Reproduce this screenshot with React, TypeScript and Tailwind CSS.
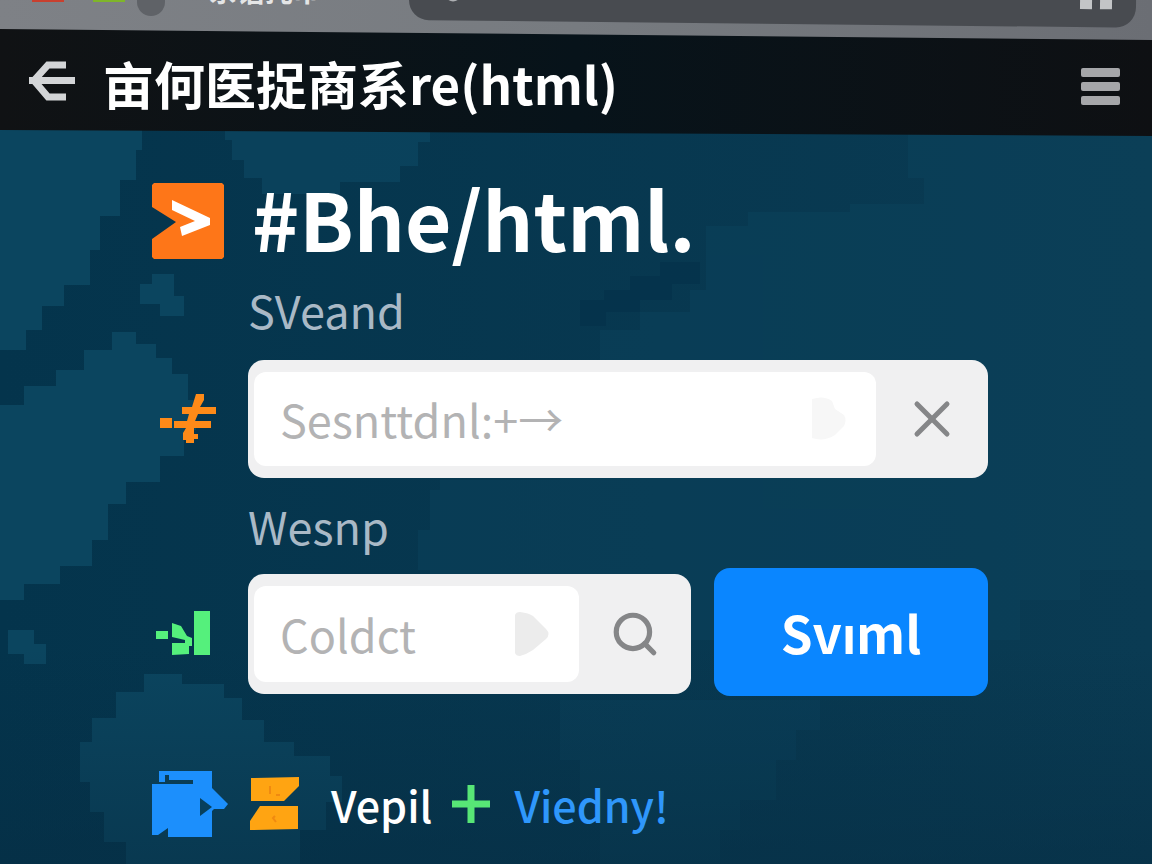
import type { ReactNode } from 'react';
import { Search, X } from 'lucide-react';

function Backdrop() {
  return (
    <svg
      className="absolute inset-0 h-full w-full"
      viewBox="0 0 1152 864"
      preserveAspectRatio="none"
      shapeRendering="crispEdges"
      aria-hidden="true"
    >
      <defs>
        <linearGradient id="sea" x1="0" y1="0" x2="1" y2="0">
          <stop offset="0" stopColor="#04344c" />
          <stop offset="1" stopColor="#0a3b53" />
        </linearGradient>
        <linearGradient id="shade" x1="0" y1="0" x2="0" y2="1">
          <stop offset="0.75" stopColor="#062c42" stopOpacity="0" />
          <stop offset="1" stopColor="#062c42" stopOpacity="0.5" />
        </linearGradient>
      </defs>
      <rect width="1152" height="864" fill="url(#sea)" />
      <g fill="#0b455f">
        <path d="M0 120H142V150H136V180H120V216H100V250H90V285H64V306H42V330H26V350H0Z" />
        <path d="M225 120H430V142H418V166H400V182H340V194H262V178H244V160H232V140H225Z" opacity="0.8" />
        <path d="M112 332H136V344H156V358H172V374H188V400H196V430H184V456H160V482H126V504H108V540H92V566H60V584H24V600H0V405H24V386H56V370H84V350H112Z" />
        <path d="M152 274H174V296H184V316H160V304H140V284H152Z" />
        <path d="M144 674H182V684H224V698H242V720H264V742H294V756H330V776H342V802H326V830H300V864H126V842H104V812H90V782H80V742H92V718H116V692H144Z" />
        <path d="M8 630H34V644H46V664H24V654H8Z" />
      </g>
      <g fill="#0c4560" opacity="0.4">
        <path d="M908 120H1152V570H1080V600H1020V640H430V490H560V370H600V330H640V312H690V290H706V226H748V212H850V204H924V178H908Z" />
        <path d="M440 480H610V500H580V530H520V570H418V530H440Z" />
        <path d="M560 700H820V730H796V760H776V800H740V830H720V864H600V800H580V760H560Z" />
      </g>
      <path d="M660 262H700V284H672V300H640V312H606V326H580V300H604V290H630V276H660Z" fill="#04324a" opacity="0.7" />
      <rect width="1152" height="864" fill="url(#shade)" />
    </svg>
  );
}

function BrowserBar() {
  return (
    <div className="relative flex h-10 items-start overflow-hidden bg-linear-to-r from-[#7e8186] via-[#777b80] to-[#6b6e74] pl-8 pr-4">
      <span className="h-[2px] w-8 bg-[#c8402f]" />
      <span className="ml-[29px] h-[2px] w-8 bg-[#7fb52a]" />
      <span className="ml-3 h-4 w-7 rounded-b-full bg-[#5f6267]" />
      <span className="-mt-[25px] ml-11 w-[200px] text-[28px] leading-[30px] font-bold text-[#e4e5e6]">系语托巾</span>
      <div className="-mt-4 flex h-9 flex-1 origin-left rotate-[0.6deg] items-start justify-between rounded-b-[20px] bg-[#484b50] pr-6 pl-9">
        <span className="h-[17px] w-4 rounded-b-full bg-[#aeb0b3]" />
        <span className="flex gap-2 pt-2">
          <i className="h-[10px] w-3 bg-[#c3c5c7]" />
          <i className="h-[10px] w-3 bg-[#c3c5c7]" />
        </span>
      </div>
    </div>
  );
}

function Header() {
  return (
    <header className="-mt-[11px] flex h-[107px] items-center bg-linear-to-r from-[#101214] via-[#07131a] to-[#0e1013] pr-8 pl-[29px] [clip-path:polygon(0_0,100%_11px,100%_100%,0_calc(100%_-_6px))]">
      <button aria-label="Back" className="shrink-0">
        <svg width="46" height="44" viewBox="0 0 46 44" fill="none" stroke="#d3d5d7" strokeWidth="7">
          <path d="M37 4H19L5 19.500L19 36H37" />
          <path d="M0 19.500H46" />
        </svg>
      </button>
      <h1 className="ml-7 text-[51px] leading-[60px] font-bold whitespace-nowrap text-white">亩何医捉商系re(html)</h1>
      <button aria-label="Menu" className="mt-2 ml-auto flex w-[39px] shrink-0 flex-col gap-[5px]">
        <span className="h-[9px] w-full rounded-xs bg-[#a5a6a9]" />
        <span className="h-[9px] w-full rounded-xs bg-[#a5a6a9]" />
        <span className="h-[9px] w-full rounded-xs bg-[#a5a6a9]" />
      </button>
    </header>
  );
}

type FieldProps = {
  id: string;
  placeholder: string;
  marker: ReactNode;
  action: ReactNode;
  actionLabel: string;
  className: string;
};

function Field({ id, placeholder, marker, action, actionLabel, className }: FieldProps) {
  return (
    <div className={`flex min-w-0 rounded-2xl bg-[#f0f0f1] py-3 pl-[6px] ${className}`}>
      <div className="flex min-w-0 flex-1 items-center rounded-xl bg-white pr-[30px] pl-[26px]">
        <input
          id={id}
          placeholder={placeholder}
          className="w-full min-w-0 bg-transparent text-[45px] leading-[60px] outline-none placeholder:text-[#b3b3b4]"
        />
        {marker}
      </div>
      <button type="button" aria-label={actionLabel} className="flex w-28 shrink-0 items-center justify-center text-[#858688]">
        {action}
      </button>
    </div>
  );
}

export default function App() {
  return (
    <div className="relative isolate min-h-screen overflow-hidden bg-[#04344c] font-['Noto_Sans_CJK_SC',sans-serif]">
      <div className="absolute inset-0 -z-10">
        <Backdrop />
      </div>
      <BrowserBar />
      <Header />

      <main className="pt-[47px] pr-[164px] pb-6 pl-[152px]">
        <div className="grid grid-cols-[72px_1fr] items-start gap-x-7">
          <svg width="72" height="76" viewBox="0 0 72 76" aria-hidden="true">
            <path d="M2 0H70L72 2V74L70 76H2L0 74V56L24 39L0 24V2Z" fill="#fe7618" />
            <path d="M20 17L58 35V42L30 53L28 44L43 38L20 27Z" fill="#fff" />
          </svg>
          <h2 className="text-[80px] leading-[68px] font-bold whitespace-nowrap text-white">#Bhe/html.</h2>
        </div>

        <form onSubmit={(e) => e.preventDefault()}>
          <div className="mt-[21px] grid grid-cols-[72px_1fr] items-center gap-x-6">
            <label htmlFor="sveand" className="col-start-2 text-[45px] leading-[60px] text-[#a9b9c6]">
              SVeand
            </label>
            <svg width="72" height="56" viewBox="0 0 72 56" className="mt-5" aria-hidden="true">
              <g fill="#fe8a18">
                <path d="M8 27H20V37H8Z" />
                <path d="M22 30H59V37H42V43H46V48H42V52H34V49H31V42L34 37H22Z" />
                <path d="M30 16H40L44 3H52V9L48 16H64V23H46L43 30H35L37 23H30Z" />
              </g>
            </svg>
            <Field
              id="sveand"
              placeholder="Sesnttdnl:+→"
              actionLabel="Clear"
              className="mt-5 h-[118px]"
              marker={
                <svg width="34" height="44" viewBox="0 0 34 44" className="shrink-0" aria-hidden="true">
                  <path d="M0 2Q12 -2 20 4L23 12L32 18Q35 23 32 29L23 38Q12 45 0 41Z" fill="#f7f7f7" />
                </svg>
              }
              action={<X size={60} strokeWidth={2} />}
            />
          </div>

          <div className="mt-[18px] grid grid-cols-[72px_1fr] items-center gap-x-6">
            <label htmlFor="wesnp" className="col-start-2 text-[45px] leading-[60px] text-[#a9b9c6]">
              Wesnp
            </label>
            <svg width="72" height="50" viewBox="0 0 72 50" className="mt-4" aria-hidden="true">
              <g fill="#55f07c">
                <path d="M4 22H16V30H4Z" />
                <path d="M20 14L29 17L35 27L40 29V37H37V45L20 46V34H33V31L20 28Z" />
                <path d="M42 2H58V46H42Z" />
              </g>
            </svg>
            <div className="mt-3 flex items-center gap-[23px]">
              <Field
                id="wesnp"
                placeholder="Coldct"
                actionLabel="Search"
                className="mt-1 h-[120px] flex-1"
                marker={
                  <svg width="34" height="44" viewBox="0 0 34 44" className="shrink-0" aria-hidden="true">
                    <path d="M0 3Q1 0 5 0Q14 1 18 4L31 17Q36 22 31 27L18 38Q12 42 5 44Q1 44 0 41Z" fill="#ececec" />
                  </svg>
                }
                action={<Search size={50} strokeWidth={2.5} />}
              />
              <button className="h-32 w-[274px] shrink-0 rounded-2xl bg-[#0a86ff] text-[51px] leading-[60px] font-bold text-white">
                Svıml
              </button>
            </div>
          </div>
        </form>

        <footer className="mt-[74px] flex items-center">
          <svg width="76" height="68" viewBox="0 0 76 68" aria-hidden="true">
            <path
              d="M7 1H60V18L76 34L72 39H62L60 41V67H16V58L6 65H0V14H41V10H17V5H13V12H7Z"
              fill="#1c8ffc"
            />
            <path d="M48 28L60 37L48 46Z" fill="#07405c" />
          </svg>
          <svg width="50" height="54" viewBox="0 0 50 54" className="ml-[22px]" aria-hidden="true">
            <path d="M1 1L49 0V9L34 24H1Z" fill="#ffa412" />
            <path d="M10 29H48V52L0 53V44Z" fill="#ffa412" />
            <path d="M20 9V17M26 18H30M25 39L23 41L26 45" stroke="#f08a10" strokeWidth="2" fill="none" />
          </svg>
          <span className="ml-[31px] text-[43px] leading-[60px] font-medium text-white">Vepil</span>
          <svg width="38" height="38" viewBox="0 0 38 38" className="ml-5" aria-hidden="true">
            <path d="M0 19H38M19 0V38" stroke="#57e676" strokeWidth="7" />
          </svg>
          <a href="#viedny" className="ml-6 text-[43px] leading-[60px] font-medium text-[#2f97fb]">
            Viedny!
          </a>
        </footer>
      </main>
    </div>
  );
}
